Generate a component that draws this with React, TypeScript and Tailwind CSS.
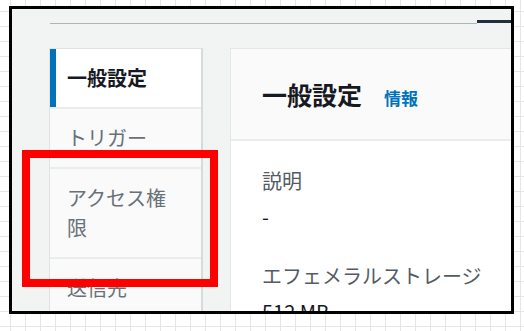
export default function App() {
  const font = { fontFamily: '"Noto Sans CJK JP", "Noto Sans", sans-serif' };

  return (
    <div
      className="relative w-[524px] h-[331px] overflow-hidden bg-white bg-[linear-gradient(to_right,#e6e6e6_1px,transparent_1px),linear-gradient(to_bottom,#e6e6e6_1px,transparent_1px)] bg-[size:15px_15px] bg-[position:10px_11px] pt-[6px] pl-[9px]"
      style={font}
    >
      {/* screenshot frame */}
      <div className="w-[505px] h-[308px] border-[3px] border-black bg-[#f2f3f3] overflow-hidden">
        {/* top tab line */}
        <div className="flex h-[15px] pt-[11px] ml-[38px]">
          <div className="flex-1 mt-[3px] h-px bg-[#aab7b8]" />
          <div className="w-[34px] h-[3px] bg-[#232f3e]" />
        </div>

        <div className="flex gap-[27px] mt-[24px] ml-[37px]">
          {/* side nav */}
          <nav className="w-[154px] shrink-0 border border-[#dfe3e3] border-r-[2px] border-r-[#d5dbdb] bg-[#fafafa] text-[20px]">
            <div className="relative bg-white py-[14px] pl-[17px] pr-[30px] leading-[30px] font-bold text-[#16191f]">
              <span className="absolute left-0 top-0 bottom-0 w-[6px] bg-[#0073bb]" />
              一般設定
            </div>
            <div className="border-t-2 border-[#eaeded] py-[14px] pl-[17px] pr-[30px] leading-[30px] text-[#687078]">
              トリガー
            </div>
            <div className="border-t-2 border-[#eaeded] py-[14px] pl-[17px] pr-[30px] leading-[30px] text-[#687078]">
              アクセス権限
            </div>
            <div className="border-t-2 border-[#eaeded] py-[14px] pl-[17px] pr-[30px] leading-[30px] text-[#687078]">
              送信先
            </div>
          </nav>

          {/* main panel */}
          <section className="w-[320px] shrink-0 border border-[#e3e7e7] bg-white">
            <div className="h-[92px] bg-[#fafafa] border-b-2 border-[#eaeded] flex items-center pl-[31px]">
              <h2 className="text-[25px] font-bold text-[#16191f] leading-none">一般設定</h2>
              <span className="ml-[22px] mt-[6px] text-[17px] font-bold text-[#0073bb] leading-none">情報</span>
            </div>
            <div className="pl-[31px] pt-[22px] text-[20px] leading-[36px]">
              <div className="text-[#545b64]">説明</div>
              <div className="text-[#16191f]">-</div>
              <div className="mt-[23px] text-[#545b64] whitespace-nowrap">エフェメラルストレージ</div>
              <div className="text-[#16191f]">512 MB</div>
            </div>
          </section>
        </div>
      </div>

      {/* annotation */}
      <div className="absolute left-[22px] top-[150px] w-[196px] h-[137px] border-[8px] border-[#ff0000]" />
    </div>
  );
}
